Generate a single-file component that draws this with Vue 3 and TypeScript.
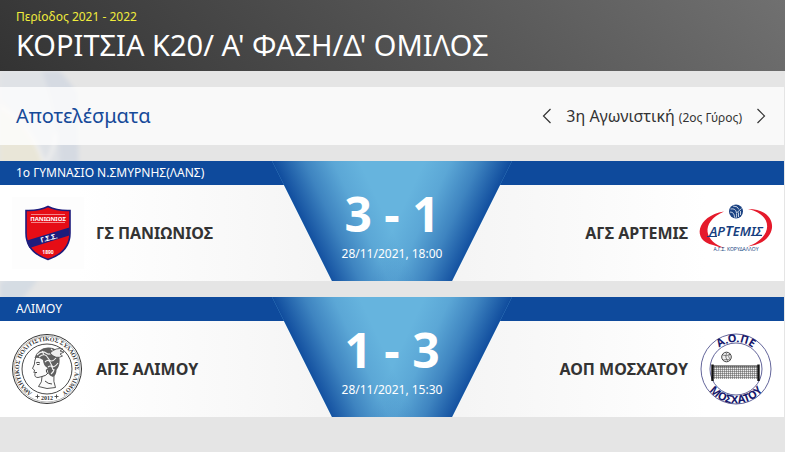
<script setup lang="ts">
interface Team {
  name: string
  logo: 'panionios' | 'artemis' | 'alimos' | 'moschato'
}

interface Match {
  venue: string
  home: Team
  away: Team
  score: string
  date: string
}

const matches: Match[] = [
  {
    venue: '1ο ΓΥΜΝΑΣΙΟ Ν.ΣΜΥΡΝΗΣ(ΛΑΝΣ)',
    home: { name: 'ΓΣ ΠΑΝΙΩΝΙΟΣ', logo: 'panionios' },
    away: { name: 'ΑΓΣ ΑΡΤΕΜΙΣ', logo: 'artemis' },
    score: '3 - 1',
    date: '28/11/2021, 18:00',
  },
  {
    venue: 'ΑΛΙΜΟΥ',
    home: { name: 'ΑΠΣ ΑΛΙΜΟΥ', logo: 'alimos' },
    away: { name: 'ΑΟΠ ΜΟΣΧΑΤΟΥ', logo: 'moschato' },
    score: '1 - 3',
    date: '28/11/2021, 15:30',
  },
]
</script>

<template>
  <div class="page">
    <svg class="watermark" width="90" height="320" viewBox="0 0 90 320" aria-hidden="true">
      <defs>
        <filter id="soft" x="-20%" y="-20%" width="140%" height="140%">
          <feGaussianBlur stdDeviation="2" />
        </filter>
      </defs>
      <g filter="url(#soft)">
        <path d="M0 0H60Q80 30 79 90Q76 150 50 190L0 215Z" fill="#dfe2e6" />
        <path d="M0 30Q36 60 44 96L0 106Z" fill="#e9e6d8" />
        <path d="M42 0H60L78 22V100L60 90Q58 40 42 0Z" fill="#d5dae2" />
        <path d="M0 36Q30 50 44 92M56 62Q54 80 46 92" fill="none" stroke="#efefef" stroke-width="3" />
        <path d="M76 90Q74 140 46 190L36 182Q58 130 60 90Z" fill="#d6dce4" />
        <path d="M0 212Q30 200 46 184Q40 220 0 244Z" fill="#d5dce3" />
      </g>
    </svg>

    <header class="top">
      <p class="season">Περίοδος 2021 - 2022</p>
      <h1>ΚΟΡΙΤΣΙΑ Κ20/ Α' ΦΑΣΗ/Δ' ΟΜΙΛΟΣ</h1>
    </header>

    <main class="content">
      <section class="toolbar">
        <h2>Αποτελέσματα</h2>
        <nav class="rounds" aria-label="Αγωνιστική">
          <button type="button" aria-label="Προηγούμενη">
            <svg width="10" height="16" viewBox="0 0 10 16"><path d="M8.500 1 1.500 8l7 7" /></svg>
          </button>
          <span class="round">3η Αγωνιστική <small>(2ος Γύρος)</small></span>
          <button type="button" aria-label="Επόμενη">
            <svg width="10" height="16" viewBox="0 0 10 16"><path d="M1.500 1 8.500 8l-7 7" /></svg>
          </button>
        </nav>
      </section>

      <article v-for="match in matches" :key="match.venue" class="match">
        <div class="venue">{{ match.venue }}</div>
        <div class="teams">
          <div
            v-for="(team, side) in [match.home, match.away]"
            :key="team.name"
            class="team"
            :class="{ away: side === 1 }"
          >
            <svg v-if="team.logo === 'panionios'" class="logo" viewBox="0 0 72 72" aria-hidden="true">
              <rect width="72" height="72" fill="#fdfdfd" />
              <path d="M36 9.500Q45 14 58 13.500V36Q58 55 36 62.500Q14 55 14 36V13.500Q27 14 36 9.500Z" fill="#e60d16" stroke="#1d1c7c" stroke-width="1.600" />
              <path d="M15 43.500 57.200 30.500V38.500L17.500 51Q15 47 15 43.500Z" fill="#1d1c7c" />
              <path d="M19 17.500H53M19 25.500H53" stroke="#f6a6a8" stroke-width=".8" />
              <text x="36" y="23.800" class="crest-name">ΠΑΝΙΩΝΙΟΣ</text>
              <text x="37" y="43.500" class="crest-initials" transform="rotate(-15 37 41)">Γ.Σ.Σ.</text>
              <text x="36" y="56.500" class="crest-year">1890</text>
            </svg>

            <svg v-else-if="team.logo === 'artemis'" class="logo" viewBox="0 0 72 72" aria-hidden="true">
              <path d="M24 14.500C-4 19-8 44 13 48Q19 50.500 25 51C5 45-1 26 24 14.500Z" fill="#e51a2b" />
              <path d="M48 12C76 12 79 37 60 46Q54 49 48 49.500C72 41 75 18 48 12Z" fill="#e51a2b" />
              <circle cx="36" cy="14.500" r="7" fill="#1c4383" />
              <path d="M30.500 12Q36 11 36.500 16L41.500 11.500M30 15Q34.500 15 34.500 20.500M36.500 16.500Q37 19 36 21M38.500 15.500V20M40.500 14V18M33 9Q38 9 39 12.500" fill="none" stroke="#d5dfeb" stroke-width=".9" />
              <text x="36" y="39" class="artemis-name">ΑΡ<tspan class="artemis-tall">Τ</tspan>ΕΜΙΣ</text>
              <path d="M7 39.500H17M53 38.500H62" stroke="#173f80" stroke-width="1.200" />
              <text x="36" y="54" class="artemis-club">Α.Γ.Σ. ΚΟΡΥΔΑΛΛΟΥ</text>
            </svg>

            <svg v-else-if="team.logo === 'alimos'" class="logo" viewBox="0 0 72 72" aria-hidden="true">
              <defs>
                <path id="alimos-ring" d="M22 60.700A28 28 0 1 1 48 60.700" />
              </defs>
              <circle cx="35" cy="36" r="34.500" fill="#fff" stroke="#333" stroke-width="1" />
              <circle cx="35" cy="36" r="33" fill="none" stroke="#777" stroke-width=".5" />
              <circle cx="35" cy="36" r="25" fill="none" stroke="#333" stroke-width=".9" />
              <text class="alimos-text">
                <textPath href="#alimos-ring" startOffset="50%">ΑΘΛΗΤΙΚΟΣ ΠΟΛΙΤΙΣΤΙΚΟΣ ΣΥΛΛΟΓΟΣ ΑΛΙΜΟΥ</textPath>
              </text>
              <text x="35" y="67" class="alimos-year">2012</text>
              <path d="M23.500 63.500H27.500M25.500 61.500V65.500M42.500 63.500H46.500M44.500 61.500V65.500" stroke="#444" stroke-width=".9" />
              <path d="M24 24Q22 29 22.500 31L20.500 35.500 22.500 37 22 39.500 23 40.500Q22 44.500 26 44.500L30 43.500Q30.500 49 26.500 53.500Q35 57 43.500 54.500Q41 49 42 41L44 30 36 20Z" fill="#fafafa" stroke="#444" stroke-width=".9" />
              <path d="M22.500 25Q26 15 36 14.500Q45 14 47 22Q49 32 44.500 37Q44.500 42 41 44Q35 42 35.500 35Q31 32 31 27Q27 24 22.500 25Z" fill="#606060" />
              <path d="M25 22Q30 17 34 20T42 18M27 24Q33 19 36 25T44 25M33 29Q37 25 39 31T46 30M36 34Q40 31 41 37M39 41Q42 39 42 36M30 18 32 22M39 16Q43 19 42 22" fill="none" stroke="#f2f2f2" stroke-width="1.100" />
              <path d="M38 20Q44 14 51 16L48 18 52 19 48 21 50.500 23Q44 27 38 20Z" fill="#eee" stroke="#444" stroke-width=".8" />
              <path d="M24 30Q26 28.500 28 30M25 31.500H27.500M22.500 39.500H25M36 36Q33.500 36 34.500 39L36 40.500M30 43.500Q34 43 36 40M33 48Q36 51 40 51" fill="none" stroke="#333" stroke-width=".9" />
            </svg>

            <svg v-else class="logo" viewBox="0 0 72 72" aria-hidden="true">
              <defs>
                <path id="moschato-top" d="M9 36A27 27 0 0 1 63 36" />
                <path id="moschato-bottom" d="M1.500 36A34.500 34.500 0 0 0 70.500 36" />
                <pattern id="net" width="2" height="2" patternUnits="userSpaceOnUse">
                  <path d="M0 .5H2M.5 0V2" stroke="#555" stroke-width=".5" />
                </pattern>
              </defs>
              <circle cx="36" cy="36" r="35" fill="#fff" stroke="#3b3d80" stroke-width=".8" />
              <circle cx="36" cy="36" r="26" fill="none" stroke="#3b3d80" stroke-width=".8" />
              <text class="moschato-text">
                <textPath href="#moschato-top" startOffset="50%">Α.Ο.ΠΕ</textPath>
              </text>
              <text class="moschato-text">
                <textPath href="#moschato-bottom" startOffset="50%">ΜΟΣΧΑΤΟΥ</textPath>
              </text>
              <circle cx="26.500" cy="24" r="4.800" fill="#eee" stroke="#444" stroke-width="1" />
              <path d="M22.500 22Q26.500 24 30.500 21M23 27Q27.500 26 30.500 27M26.500 20Q24.500 24 27.500 28M29.500 21Q27.500 24 30 26" fill="none" stroke="#555" stroke-width=".7" />
              <rect x="12" y="33" width="46" height="13" fill="#eee" />
              <rect x="12" y="33" width="46" height="13" fill="url(#net)" />
              <path d="M12 33H59" stroke="#222" stroke-width="1.200" />
              <path d="M12.500 31.500V48M58.500 31.500V48" stroke="#111" stroke-width="2.400" />
            </svg>
            <strong class="name">{{ team.name }}</strong>
          </div>
        </div>
        <div class="result">
          <span class="score">{{ match.score }}</span>
          <time class="date">{{ match.date }}</time>
        </div>
      </article>
    </main>
  </div>
</template>

<style>
body {
  margin: 0;
  background: #e5e5e5;
}
</style>

<style scoped>
.page {
  position: relative;
  font-family: 'Noto Sans', 'Open Sans', sans-serif;
  color: #333;
}

.watermark {
  position: absolute;
  left: 0;
  top: 71px;
  z-index: -1;
}

.top {
  padding: 8px 16px;
  background: linear-gradient(45deg, #333 0%, #707070 100%);
}

.season {
  margin: 0;
  font-size: 12px;
  line-height: 18px;
  color: #f1ec3c;
}

h1 {
  margin: 0;
  font-size: 29px;
  line-height: 37px;
  font-weight: 400;
  color: #fff;
}

.content {
  display: flex;
  flex-direction: column;
  gap: 16px;
  padding: 16px 1px 16px 0;
}

.toolbar {
  display: flex;
  align-items: center;
  justify-content: space-between;
  padding: 0 18px 0 16px;
  background: rgba(255, 255, 255, 0.78);
}

h2 {
  margin: 0;
  font-size: 20px;
  line-height: 58px;
  font-weight: 400;
  color: #164a99;
}

.rounds {
  display: flex;
  align-items: center;
  gap: 14px;
}

.rounds button {
  display: flex;
  padding: 0;
  border: 0;
  background: none;
  cursor: pointer;
}

.rounds path {
  fill: none;
  stroke: #333;
  stroke-width: 1.2;
}

.round {
  font-size: 16px;
}

.round small {
  font-size: 12px;
}

.match {
  position: relative;
}

.venue {
  padding: 0 16px;
  background: #0e4a9c;
  color: #fff;
  font-size: 12px;
  line-height: 24px;
}

.teams {
  display: grid;
  grid-template-columns: 1fr 1fr;
  background: linear-gradient(90deg, #fff 10%, #f2f2f2 50%, #fff 90%);
}

.team {
  display: flex;
  align-items: center;
  gap: 12px;
  padding: 12px;
}

.team.away {
  flex-direction: row-reverse;
}

.logo {
  width: 72px;
  height: 72px;
  overflow: visible;
}

.name {
  font-size: 16px;
  font-weight: 700;
}

.result {
  position: absolute;
  top: 0;
  bottom: 0;
  left: 50%;
  width: 240px;
  margin-left: -120px;
  box-sizing: border-box;
  padding-top: 24px;
  display: flex;
  flex-direction: column;
  align-items: center;
  color: #fff;
  background:
    linear-gradient(65deg, #0e4a9c 50px, rgba(14, 74, 156, 0.45) 80px, rgba(14, 74, 156, 0.12) 106px, rgba(14, 74, 156, 0) 130px),
    linear-gradient(295deg, #0e4a9c 50px, rgba(14, 74, 156, 0.45) 80px, rgba(14, 74, 156, 0.12) 106px, rgba(14, 74, 156, 0) 130px),
    #66b4de;
  clip-path: polygon(0 0, 100% 0, 180px 100%, 60px 100%);
}

.score {
  font-size: 48px;
  line-height: 58px;
  font-weight: 700;
}

.date {
  font-size: 12px;
  line-height: 22px;
}

.logo text {
  text-anchor: middle;
  font-family: 'Noto Sans', sans-serif;
}

.crest-name {
  font-size: 6px;
  font-weight: 700;
  fill: #fff;
}

.crest-initials {
  font-size: 7px;
  font-weight: 700;
  fill: #fff;
}

.crest-year {
  font-size: 5px;
  font-weight: 700;
  fill: #fff;
}

.artemis-name {
  font-size: 13px;
  font-style: italic;
  font-weight: 600;
  fill: #173f80;
}

.artemis-tall {
  font-size: 15px;
}

.artemis-club {
  font-size: 5px;
  fill: #173f80;
}

.logo .alimos-text,
.logo .alimos-year {
  font-family: 'Liberation Serif', serif;
  font-size: 6px;
  font-weight: 700;
  fill: #333;
}

.moschato-text {
  font-size: 11px;
  font-weight: 700;
  fill: #17186b;
}
</style>
